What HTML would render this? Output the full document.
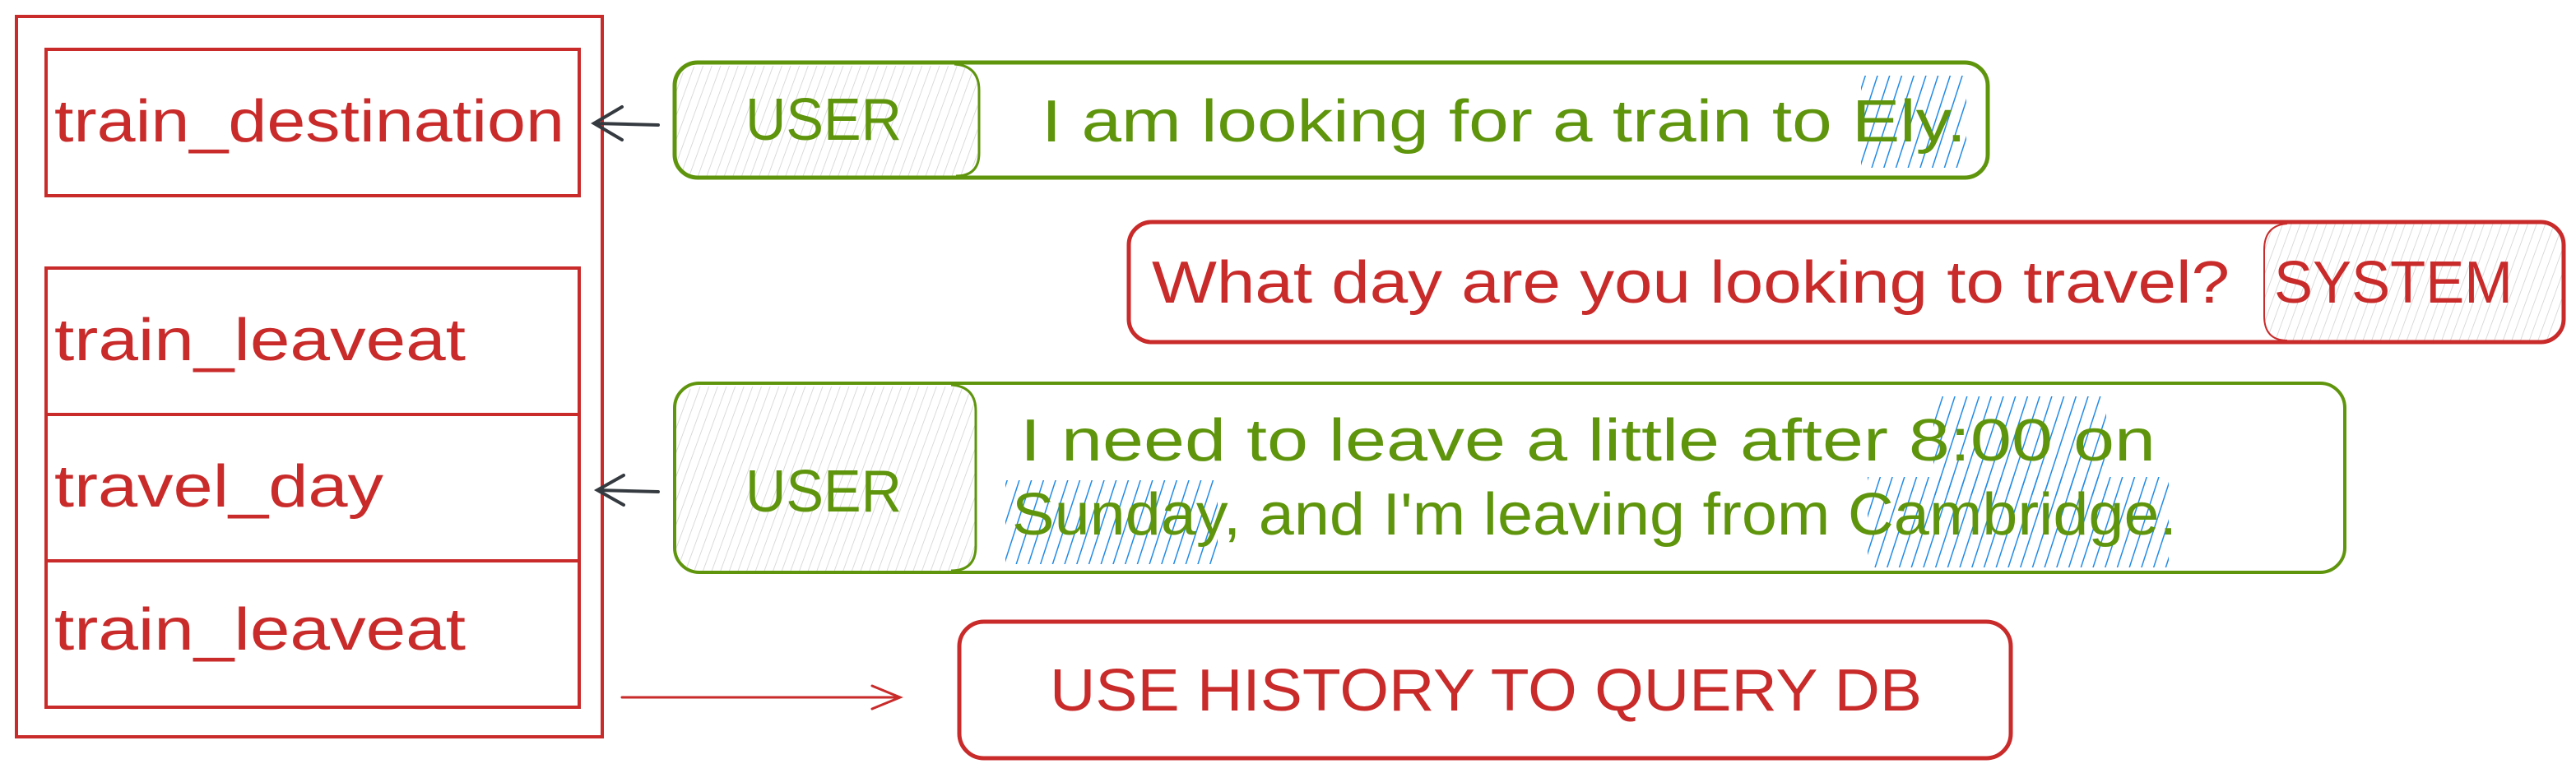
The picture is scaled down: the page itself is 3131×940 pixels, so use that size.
<!DOCTYPE html>
<html><head><meta charset="utf-8"><style>
html,body{margin:0;padding:0;background:#fff;width:3131px;height:940px;overflow:hidden}
text{font-family:"Liberation Sans Narrow","Liberation Sans",sans-serif}
</style></head><body>
<svg width="3131" height="940" viewBox="0 0 3131 940" xmlns="http://www.w3.org/2000/svg">
<defs>
<pattern id="gh" width="10" height="10" patternUnits="userSpaceOnUse" patternTransform="rotate(20)">
<line x1="0" y1="0" x2="0" y2="10" stroke="#cfcfcf" stroke-width="1.5"/></pattern>
<pattern id="bh" width="14" height="14" patternUnits="userSpaceOnUse" patternTransform="rotate(18)">
<line x1="0" y1="0" x2="0" y2="14" stroke="#228be6" stroke-width="3"/></pattern>
</defs>
<g fill="none" stroke="#c92a2a" stroke-width="4">
<rect x="20" y="20" width="712" height="876"/>
<rect x="56" y="60" width="648" height="178"/>
<rect x="56" y="326" width="648" height="534"/>
<line x1="56" y1="504" x2="704" y2="504"/>
<line x1="56" y1="682" x2="704" y2="682"/>
</g>
<g fill="#c92a2a" font-size="72">
<text x="66" y="172" textLength="620" lengthAdjust="spacingAndGlyphs">train_destination</text>
<text x="66" y="438" textLength="500" lengthAdjust="spacingAndGlyphs">train_leaveat</text>
<text x="66" y="616" textLength="400" lengthAdjust="spacingAndGlyphs">travel_day</text>
<text x="66" y="790" textLength="500" lengthAdjust="spacingAndGlyphs">train_leaveat</text>
</g>
<g fill="none" stroke="#343a40" stroke-width="4" stroke-linecap="round">
<path d="M800 152 L722 150 M756 130 L722 150 L756 170"/>
<path d="M800 598 L726 596 M758 578 L726 596 L758 614"/>
</g>
<g fill="none" stroke="#c92a2a" stroke-width="3" stroke-linecap="round">
<path d="M756 848 L1094 848 M1060 834 L1094 848 L1060 862"/>
</g>
<!-- USER 1 -->
<rect x="822" y="80" width="366" height="134" rx="28" fill="url(#gh)"/>
<rect x="820" y="76" width="1596" height="140" rx="28" fill="none" stroke="#5f950d" stroke-width="5"/>
<path d="M1160 78 Q1190 80 1190 110 L1190 186 Q1190 214 1162 214" fill="none" stroke="#5f950d" stroke-width="3"/>
<rect x="2262" y="92" width="128" height="112" fill="url(#bh)"/>
<g fill="#5f950d" font-size="72">
<text x="906" y="170" textLength="190" lengthAdjust="spacingAndGlyphs">USER</text>
<text x="1266" y="172" textLength="1124" lengthAdjust="spacingAndGlyphs">I am looking for a train to Ely.</text>
</g>
<!-- SYSTEM -->
<rect x="2752" y="272" width="362" height="142" rx="28" fill="url(#gh)"/>
<rect x="1372" y="270" width="1744" height="146" rx="28" fill="none" stroke="#c92a2a" stroke-width="5"/>
<path d="M2780 272 Q2752 274 2752 304 L2752 384 Q2752 414 2780 414" fill="none" stroke="#c92a2a" stroke-width="2"/>
<g fill="#c92a2a" font-size="72">
<text x="1400" y="368" textLength="1310" lengthAdjust="spacingAndGlyphs">What day are you looking to travel?</text>
<text x="2764" y="368" textLength="290" lengthAdjust="spacingAndGlyphs">SYSTEM</text>
</g>
<!-- USER 2 -->
<rect x="822" y="470" width="364" height="224" rx="30" fill="url(#gh)"/>
<rect x="820" y="466" width="2030" height="230" rx="30" fill="none" stroke="#5f950d" stroke-width="4"/>
<path d="M1156 468 Q1186 470 1186 500 L1186 664 Q1186 694 1156 694" fill="none" stroke="#5f950d" stroke-width="3"/>
<rect x="2350" y="482" width="210" height="120" fill="url(#bh)"/>
<rect x="1222" y="584" width="258" height="102" fill="url(#bh)"/>
<rect x="2270" y="580" width="366" height="110" fill="url(#bh)"/>
<g fill="#5f950d" font-size="72">
<text x="906" y="622" textLength="190" lengthAdjust="spacingAndGlyphs">USER</text>
<text x="1240" y="560" textLength="1380" lengthAdjust="spacingAndGlyphs">I need to leave a little after 8:00 on</text>
<text x="1230" y="650" textLength="1416" lengthAdjust="spacingAndGlyphs">Sunday, and I'm leaving from Cambridge.</text>
</g>
<!-- Query -->
<rect x="1166" y="756" width="1278" height="166" rx="30" fill="none" stroke="#c92a2a" stroke-width="5"/>
<text x="1276" y="864" fill="#c92a2a" font-size="72" textLength="1060" lengthAdjust="spacingAndGlyphs">USE HISTORY TO QUERY DB</text>
</svg>
</body></html>
